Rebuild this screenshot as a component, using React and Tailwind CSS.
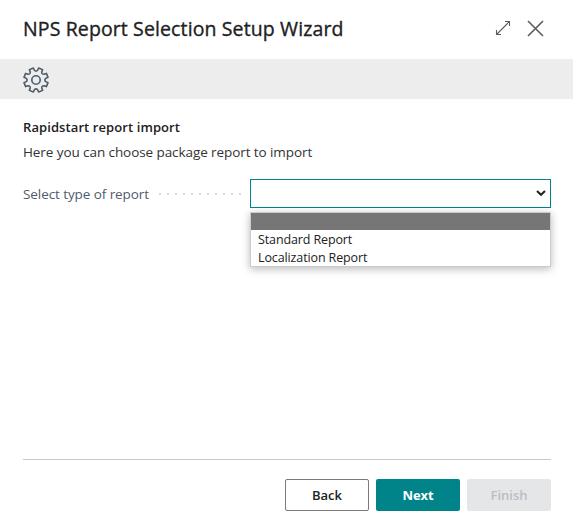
import React from "react";

const TEETH = 8;

function gearPath() {
  const point = (r, deg) => {
    const a = (deg * Math.PI) / 180;
    return `${(13 + r * Math.sin(a)).toFixed(2)} ${(13 - r * Math.cos(a)).toFixed(2)}`;
  };
  let d = "";
  for (let i = 0; i < TEETH; i++) {
    const c = i * 45 + 22.5;
    d += `${i ? "L" : "M"}${point(9.9, c - 13)}L${point(12.3, c - 10)}L${point(12.3, c + 10)}L${point(9.9, c + 13)}`;
    d += `Q${point(8, c + 22.5)} ${point(9.9, c + 32)}`;
  }
  return d + "Z";
}

function GearIcon() {
  return (
    <svg className="block h-[26px] w-[26px] text-[#505c6d]" viewBox="0 0 26 26" fill="none" stroke="currentColor" strokeWidth="1.6" strokeLinejoin="round">
      <path d={gearPath()} />
      <circle cx="13" cy="13" r="4.2" />
    </svg>
  );
}

function Header() {
  return (
    <header className="flex h-[59px] items-center pb-[3px] pl-[23px] pr-[29px]">
      <h1 className="w-[330px] whitespace-nowrap pt-px text-[19.5px] leading-[26px] tracking-[0.12px] text-[#212121] [-webkit-text-stroke:0.35px_#212121]">
        NPS Report Selection Setup Wizard
      </h1>
      <div className="ml-auto flex items-center text-[#5c5c5c]">
        <button aria-label="Expand" className="mr-[16px]">
          <svg className="block h-4 w-4" viewBox="0 0 16 16" fill="none" stroke="currentColor" strokeWidth="1.1">
            <path d="M1.5 14.5 14.5 1.5M10 1.5h4.5V6M1.5 10v4.5H6" />
          </svg>
        </button>
        <button aria-label="Close">
          <svg className="block h-[17px] w-[17px]" viewBox="0 0 17 17" fill="none" stroke="currentColor" strokeWidth="1.6">
            <path d="M1 1 16 16M16 1 1 16" />
          </svg>
        </button>
      </div>
    </header>
  );
}

function Dropdown() {
  return (
    <div className="relative h-[29px] w-[301px] border border-[#00848a] bg-white">
      <svg className="ml-[285px] mt-[9px] block h-[8px] w-[10px] text-[#212121]" viewBox="0 0 10 8" fill="none" stroke="currentColor" strokeWidth="2">
        <path d="M1 2 5 5.8 9 2" />
      </svg>
      <ul className="absolute -left-px top-[32px] h-[55px] w-[301px] border border-[#ccc] bg-white text-[12.5px] leading-[18px] tracking-[-0.12px] text-[#212121] shadow-[0_2px_8px_rgba(0,0,0,0.28)]">
        <li className="mb-px h-[17px] bg-[#767676]" />
        <li className="h-[18px] pl-[7px]">Standard Report</li>
        <li className="h-[18px] pl-[7px]">Localization Report</li>
      </ul>
    </div>
  );
}

export default function App() {
  return (
    <div className="flex h-[532px] w-[573px] flex-col overflow-hidden bg-white font-['Open_Sans','Noto_Sans',sans-serif]">
      <Header />
      <div className="flex h-[40px] shrink-0 items-center bg-[#ededed] pl-[23px] pt-[2px]">
        <GearIcon />
      </div>
      <main className="flex-1 pt-[18px] pr-[22px] pl-[23px]">
        <h2 className="text-[13px] leading-5 font-semibold tracking-[0.09px] text-[#212121]">Rapidstart report import</h2>
        <p className="mt-[5px] text-[13.5px] leading-5 tracking-[-0.08px] text-[#333]">Here you can choose package report to import</p>
        <div className="mt-[17px] flex items-center">
          <label className="w-[136px] whitespace-nowrap text-[13.5px] leading-5 tracking-[-0.08px] text-[#505c6d]">Select type of report</label>
          <div className="mr-[9px] flex w-[82px] justify-between">
            {Array.from({ length: 11 }, (_, i) => (
              <i key={i} className="h-[2px] w-[2px] bg-[#d8d8d8]" />
            ))}
          </div>
          <Dropdown />
        </div>
      </main>
      <footer className="mr-[22px] ml-[23px] flex h-[73px] shrink-0 justify-end gap-[7px] border-t border-[#c8c8c8] pt-[19px] text-[13px] font-semibold">
        <button className="h-8 w-[84px] rounded-[2px] border border-[#7a7a7a] pt-px text-[#212121]">Back</button>
        <button className="h-8 w-[84px] rounded-[2px] bg-[#00848a] pt-px text-white font-bold tracking-[-0.1px]">Next</button>
        <button className="h-8 w-[84px] rounded-[2px] bg-[#e5e6e8] pt-px text-[#b9bec5]">Finish</button>
      </footer>
    </div>
  );
}
